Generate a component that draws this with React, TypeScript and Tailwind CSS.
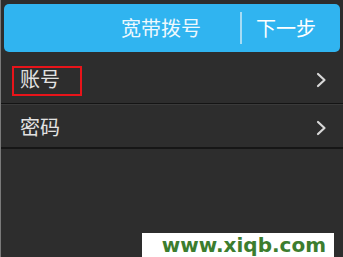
import React from "react";

const Chevron = () => (
  <svg width="12" height="16" viewBox="0 0 12 16" fill="none">
    <path d="M3 2 L9.5 8 L3 14" stroke="#d8d8d8" strokeWidth="2.2" strokeLinecap="round" strokeLinejoin="round" />
  </svg>
);

export default function App() {
  const cjk = { fontFamily: '"Noto Sans CJK SC", "Noto Sans", sans-serif' };
  return (
    <div className="relative w-[343px] h-[257px] overflow-hidden bg-[#2d2d2d] border-l border-[#7a7a7a]" style={cjk}>
      <div className="pl-[3px] pr-[3px] pt-[4px]">
        <div className="h-[48px] rounded-[5px] bg-[#30b4f0] flex items-center justify-end pr-[24px]">
          <span className="text-[20px] leading-none text-[#eef8fd]">宽带拨号</span>
          <div className="ml-[39px] w-[2px] h-[32px] bg-[#a6dcf5]" />
          <span className="ml-[14px] text-[20px] leading-none text-white">下一步</span>
        </div>
      </div>
      <div className="h-[51px] flex items-start pt-[17px] pl-[19px] pr-[16px]">
        <span className="relative block h-[20px] text-[20px] leading-[20px] text-[#e2e2e2]">
          账号
          <span className="absolute left-[-8px] top-[-3px] w-[70px] h-[30px] border-2 border-[#e8141a]" />
        </span>
        <div className="ml-auto mt-[3px] flex items-center"><Chevron /></div>
      </div>
      <div className="h-[1px] bg-[#141414]" />
      <div className="h-[1px] bg-[#3a3a3a]" />
      <div className="h-[42px] flex items-start pt-[12px] pl-[19px] pr-[16px]">
        <span className="block h-[20px] text-[20px] leading-[20px] text-[#e2e2e2]">密码</span>
        <div className="ml-auto mt-[3px] flex items-center"><Chevron /></div>
      </div>
      <div className="h-[2px] bg-[#161616]" />
      <div className="absolute left-[141px] top-[233px] w-[192px] h-[24px] bg-white flex items-center justify-end pr-[8px]">
        <span className="text-[20px] font-bold leading-none text-[#3c7d2e]" style={{ fontFamily: '"DejaVu Sans", "Liberation Sans", sans-serif' }}>
          www.xiqb.com
        </span>
      </div>
    </div>
  );
}
